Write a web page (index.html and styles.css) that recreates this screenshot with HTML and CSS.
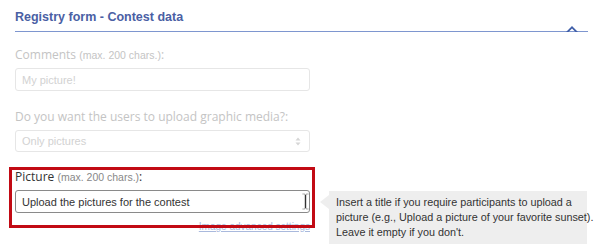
FILE: index.html
```html
<!DOCTYPE html>
<html lang="en">
<head>
<meta charset="utf-8">
<title>Registry form - Contest data</title>
<link rel="stylesheet" href="styles.css">
</head>
<body>
<div class="page">
  <div class="header">
    <h2 class="title">Registry form - Contest data</h2>
    <svg class="chevron" width="14" height="8" viewBox="0 0 14 8"><path d="M1 8 L7 2 L13 8 L10.5 8 L7 4.6 L3.5 8 Z" fill="#3f5ea8"/></svg>
  </div>

  <div class="group faded">
    <div class="label">Comments <span class="hint">(max. 200 chars.)</span>:</div>
    <div class="input"><span class="placeholder">My picture!</span></div>
  </div>

  <div class="group faded">
    <div class="label">Do you want the users to upload graphic media?:</div>
    <div class="input select"><span class="placeholder">Only pictures</span>
      <svg class="spin" width="6" height="9" viewBox="0 0 6 9"><path d="M3 0.5 L5.5 3.5 L0.5 3.5 Z M3 8.5 L5.5 5.5 L0.5 5.5 Z" fill="#d6d6d6"/></svg>
    </div>
  </div>

  <div class="row">
    <div class="group active">
      <div class="label">Picture <span class="hint">(max. 200 chars.)</span>:</div>
      <div class="input filled"><span class="value">Upload the pictures for the contest</span>
        <svg class="ibeam" width="7" height="17" viewBox="0 0 7 17"><path d="M0.5 0.5 H2.5 L3.5 1.5 L4.5 0.5 H6.5 V1.5 H4.5 V15.5 H6.5 V16.5 H4.5 L3.5 15.5 L2.5 16.5 H0.5 V15.5 H2.5 V1.5 H0.5 Z" fill="#333" stroke="#fff" stroke-width="0.6"/></svg>
      </div>
      <div class="linkrow"><a class="adv" href="#">Image advanced settings</a></div>
    </div>
    <div class="tooltip">Insert a title if you require participants to upload a<br>picture (e.g., Upload a picture of your favorite sunset).<br>Leave it empty if you don't.</div>
  </div>

  <div class="highlight"></div>
</div>
</body>
</html>
```

FILE: styles.css
```css
html, body {
  margin: 0;
  padding: 0;
  background: #ffffff;
}

.page {
  position: relative;
  width: 610px;
  height: 252px;
  overflow: hidden;
  padding-left: 15px;
  box-sizing: border-box;
}

.header {
  position: relative;
  width: 573px;
  padding-top: 9px;
  border-bottom: 1px solid #7e96cf;
  height: 22px;
}

.title {
  margin: 0;
  font-family: "Liberation Sans", Arial, sans-serif;
  font-weight: bold;
  font-size: 12.5px;
  line-height: 16px;
  color: #4a60a4;
}

.chevron {
  position: absolute;
  right: 9px;
  bottom: -1px;
}

.group {
  width: 295px;
  margin-top: 13px;
}

.group + .group {
  margin-top: 16px;
}

.row .group {
  margin-top: 0;
}

.label {
  font-family: "Open Sans", sans-serif;
  font-size: 12px;
  line-height: 20px;
  height: 20px;
  margin-bottom: 3px;
  color: #333;
}

.hint {
  font-family: "Liberation Sans", Arial, sans-serif;
  font-size: 10.5px;
  color: #888;
}

.faded .label,
.faded .hint {
  color: #c4c4c4;
}

.input {
  position: relative;
  box-sizing: border-box;
  height: 23px;
  border: 1px solid #e6e6e6;
  border-radius: 3px;
  padding: 0 6px;
  display: flex;
  align-items: center;
  font-family: "Liberation Sans", Arial, sans-serif;
  font-size: 11px;
}

.select {
  height: 22px;
}

.placeholder {
  color: #d2d2d2;
}

.spin {
  position: absolute;
  right: 8px;
  top: 6px;
}

.filled {
  border-color: #8a8a8a;
}

.value {
  color: #333;
}

.ibeam {
  position: absolute;
  right: 0px;
  top: 2px;
}

.row {
  display: flex;
  align-items: flex-start;
  margin-top: 15px;
}

.linkrow {
  display: flex;
  justify-content: flex-end;
  margin-top: 8px;
}

.adv {
  font-family: "Liberation Sans", Arial, sans-serif;
  font-size: 10px;
  line-height: 12px;
  color: #a9b9dd;
  text-decoration: underline;
}

.tooltip {
  position: relative;
  box-sizing: border-box;
  width: 258px;
  margin-left: 19px;
  margin-top: 24px;
  padding: 4px 4px 4px 7px;
  background: #eeeeee;
  font-family: "Liberation Sans", Arial, sans-serif;
  font-size: 10.8px;
  line-height: 15px;
  color: #333;
  white-space: nowrap;
}

.tooltip::before {
  content: "";
  position: absolute;
  left: -9px;
  top: 4px;
  border-style: solid;
  border-width: 7px 9px 7px 0;
  border-color: transparent #eeeeee transparent transparent;
}

.highlight {
  position: absolute;
  left: 9px;
  top: 167px;
  width: 306px;
  height: 61px;
  box-sizing: border-box;
  border: 3px solid #c20a14;
  pointer-events: none;
}
```
